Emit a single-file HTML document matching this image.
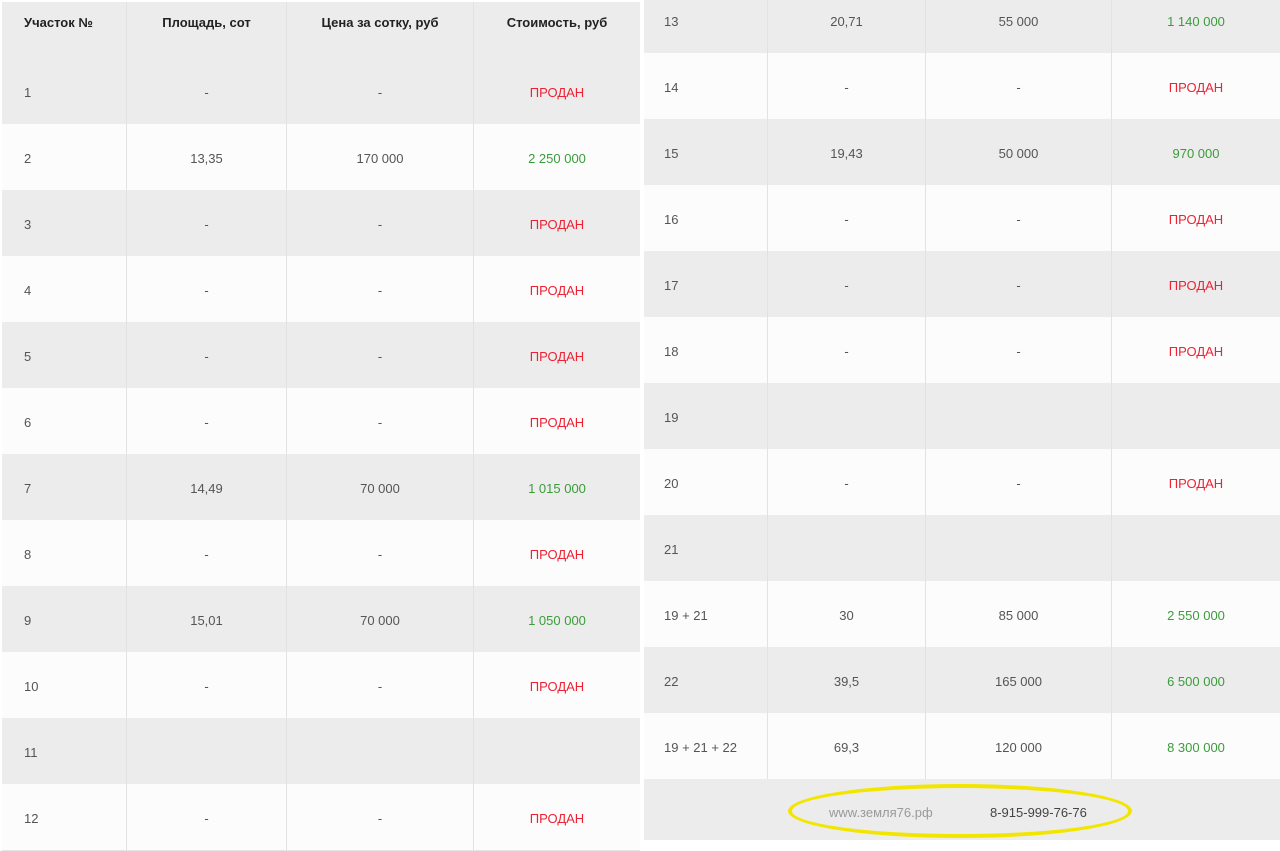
<!DOCTYPE html>
<html><head><meta charset="utf-8"><style>
body{margin:0;width:1280px;height:840px;overflow:hidden;background:#fff;font-family:"Liberation Sans",Arial,sans-serif;font-size:13px;color:#555;position:relative}
.r{position:absolute;display:flex;border-bottom:1px solid #e4e4e4}
.c{box-sizing:border-box;border-right:1px solid #e2e2e2;display:flex;align-items:center;justify-content:center;height:100%;padding-top:3px}
.c:last-child{border-right:none}
.c.f{justify-content:flex-start}
.g{background:#ececec}.w{background:#fcfcfd}
.red{color:#ee2233}.grn{color:#3a9d3a}
.h .c{font-weight:bold;color:#222;align-items:flex-start;padding-top:13px}
</style></head><body>
<script>
var Lc=[125,160,187,166],Rc=[124,158,186,168];
function row(x,y,h,cols,vals,cls,pad){
 var d=document.createElement('div');d.className='r '+cls;d.style.left=x+'px';d.style.top=y+'px';d.style.height=h+'px';
 for(var i=0;i<4;i++){var c=document.createElement('div');c.className='c'+(i==0?' f':'');c.style.width=cols[i]+'px';if(i==0)c.style.paddingLeft=pad+'px';
 var v=vals[i]||'';if(i==3&&v=='ПРОДАН')c.className+=' red';else if(i==3&&v)c.className+=' grn';c.textContent=v;d.appendChild(c);}
 document.body.appendChild(d);}
row(2,2,56,Lc,['Участок №','Площадь, сот','Цена за сотку, руб','Стоимость, руб'],'g h',22);
var P=['-','-','ПРОДАН'];
var L=[['1'].concat(P),['2','13,35','170 000','2 250 000'],['3'].concat(P),['4'].concat(P),['5'].concat(P),['6'].concat(P),['7','14,49','70 000','1 015 000'],['8'].concat(P),['9','15,01','70 000','1 050 000'],['10'].concat(P),['11','','',''],['12'].concat(P)];
L.forEach(function(v,i){row(2,58+66*i,66,Lc,v,i%2?'w':'g',22)});
var R=[['13','20,71','55 000','1 140 000'],['14'].concat(P),['15','19,43','50 000','970 000'],['16'].concat(P),['17'].concat(P),['18'].concat(P),['19','','',''],['20'].concat(P),['21','','',''],['19 + 21','30','85 000','2 550 000'],['22','39,5','165 000','6 500 000'],['19 + 21 + 22','69,3','120 000','8 300 000']];
R.forEach(function(v,i){row(644,-13+66*i,66,Rc,v,i%2?'w':'g',20)});
</script>
<div style="position:absolute;left:644px;top:779px;width:636px;height:61px;background:#ececec"></div>
<div style="position:absolute;left:788px;top:784px;width:344px;height:54px;box-sizing:border-box;border:4px solid #f2e600;border-radius:50%"></div>
<div style="position:absolute;left:829px;top:805px;color:#999;font-size:13px">www.земля76.рф</div>
<div style="position:absolute;left:990px;top:805px;color:#444;font-size:13px">8-915-999-76-76</div>
</body></html>
